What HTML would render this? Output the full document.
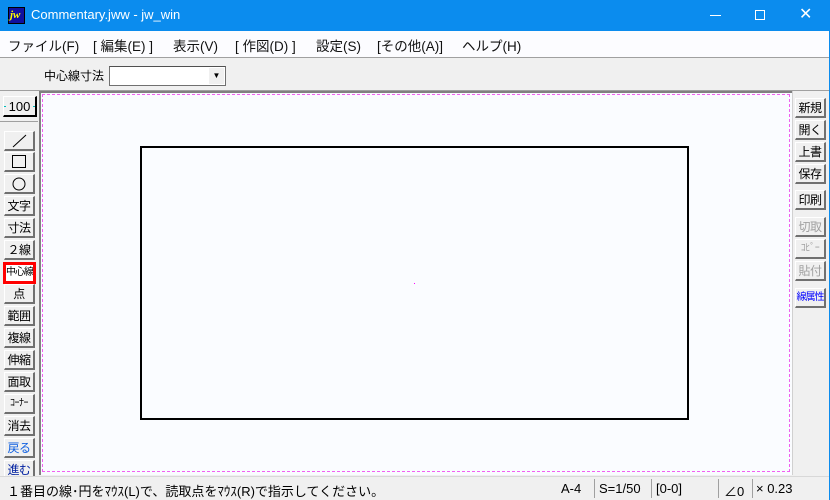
<!DOCTYPE html><html><head><meta charset="utf-8"><style>
*{margin:0;padding:0;box-sizing:border-box}
body{width:830px;height:500px;overflow:hidden;background:#f0f0f0;position:relative;font-family:"Liberation Sans","Noto Sans CJK JP",sans-serif;font-size:13px;color:#000}
.a{position:absolute}
.title{left:0;top:0;width:830px;height:31px;background:#0b8cee;color:#fff}
.menu{left:0;top:31px;width:830px;height:27px;background:#fcfcff;border-bottom:1px solid #a0a0a0}
.menu span{position:absolute;top:4px;font-size:13.5px;color:#111}
.btn{position:absolute;width:31px;height:20px;background:#f0f0f0;border-top:1px solid #fff;border-left:1px solid #fff;border-right:2px solid #707070;border-bottom:2px solid #707070;font-size:12px;text-align:center;line-height:18px;white-space:nowrap;overflow:hidden;letter-spacing:-0.5px}
</style></head><body>
<div class="a title">
 <div class="a" style="left:8px;top:7px;width:17px;height:17px;background:#1010a0;border:1px solid #000"><div style="color:#ff0;font:italic bold 11px 'Liberation Serif',serif;margin:1px 0 0 1px">jw</div></div>
 <div class="a" style="left:31px;top:7px;font-size:13px">Commentary.jww - jw_win</div>
 <div class="a" style="left:710px;top:15px;width:11px;height:1px;background:#fff"></div>
 <div class="a" style="left:755px;top:10px;width:10px;height:10px;border:1px solid #fff"></div>
 <div class="a" style="left:799px;top:4px;font-size:16px">✕</div>
</div>
<div class="a menu">
 <span style="left:8px">ファイル(F)</span><span style="left:93px">[ 編集(E) ]</span><span style="left:173px">表示(V)</span><span style="left:235px">[ 作図(D) ]</span><span style="left:316px">設定(S)</span><span style="left:377px">[その他(A)]</span><span style="left:462px">ヘルプ(H)</span>
</div>
<div class="a" style="left:44px;top:67px;font-size:12px">中心線寸法</div>
<div class="a" style="left:109px;top:66px;width:117px;height:20px;background:#fff;border:1px solid #707070;border-top-color:#505050"></div>
<div class="a" style="left:209px;top:68px;width:15px;height:16px;background:#f0f0f0;font-size:8px;text-align:center;line-height:16px">▼</div>
<div class="a" style="left:0;top:90px;width:830px;height:1px;background:#a0a0a0"></div>
<div class="a" style="left:39px;top:91px;width:753px;height:384px;background:#fafcff;border-left:2px solid #808080;border-top:2px solid #808080"></div>
<div class="a" style="left:42px;top:94px;width:748px;height:378px;border:1px dashed #f060f0"></div>
<div class="a" style="left:140px;top:146px;width:549px;height:274px;border:2px solid #000"></div>
<div class="a" style="left:414px;top:283px;width:1px;height:1px;background:#f0f"></div>
<div class="btn" style="left:3px;top:96px;width:34px;height:21px;font-size:13px;line-height:19px;border-right-color:#000;border-bottom-color:#000;letter-spacing:0">100</div>
<div class="a" style="left:4px;top:106px;width:2px;height:1px;background:#0bb"></div>
<div class="a" style="left:33px;top:106px;width:2px;height:1px;background:#0bb"></div>
<div class="a" style="left:0;top:121px;width:38px;height:1px;background:#a0a0a0"></div>
<div class="btn" style="left:4px;top:131px"><svg width="28" height="17"><line x1="8" y1="15" x2="21" y2="3" stroke="#000"/></svg></div>
<div class="btn" style="left:4px;top:152px"><svg width="28" height="17"><rect x="7.5" y="2.5" width="13" height="12" fill="none" stroke="#000"/></svg></div>
<div class="btn" style="left:4px;top:174px"><svg width="28" height="17"><circle cx="14" cy="9" r="6" fill="none" stroke="#000"/></svg></div>
<div class="btn" style="left:4px;top:196px">文字</div>
<div class="btn" style="left:4px;top:218px">寸法</div>
<div class="btn" style="left:4px;top:240px">２線</div>
<div class="btn" style="left:3px;top:262px;width:33px;height:22px;border:3px solid #f00;background:#fff;line-height:16px;font-size:10px;letter-spacing:-1px">中心線</div>
<div class="btn" style="left:4px;top:284px">点</div>
<div class="btn" style="left:4px;top:306px">範囲</div>
<div class="btn" style="left:4px;top:328px">複線</div>
<div class="btn" style="left:4px;top:350px">伸縮</div>
<div class="btn" style="left:4px;top:372px">面取</div>
<div class="btn" style="left:4px;top:394px;font-size:10px">ｺｰﾅｰ</div>
<div class="btn" style="left:4px;top:416px">消去</div>
<div class="btn" style="left:4px;top:438px;color:#1060e0">戻る</div>
<div class="btn" style="left:4px;top:460px;color:#0020a0">進む</div>
<div class="a" style="left:792px;top:91px;width:1px;height:384px;background:#d0d0d0"></div>
<div class="btn" style="left:795px;top:98px">新規</div>
<div class="btn" style="left:795px;top:120px">開く</div>
<div class="btn" style="left:795px;top:142px">上書</div>
<div class="btn" style="left:795px;top:164px">保存</div>
<div class="btn" style="left:795px;top:190px">印刷</div>
<div class="btn" style="left:795px;top:217px;color:#a0a0a0">切取</div>
<div class="btn" style="left:795px;top:239px;color:#a0a0a0;font-size:10px">ｺﾋﾟｰ</div>
<div class="btn" style="left:795px;top:261px;color:#a0a0a0">貼付</div>
<div class="btn" style="left:795px;top:288px;color:#00f;font-size:10px;letter-spacing:-1px">線属性</div>
<div class="a" style="left:0;top:476px;width:830px;height:24px;background:#f0f0f0;border-top:1px solid #d8d8d8"></div>
<div class="a" style="left:7px;top:481px;font-size:13px">１番目の線･円をﾏｳｽ(L)で、読取点をﾏｳｽ(R)で指示してください。</div>
<div class="a" style="left:561px;top:481px;font-size:13px">A-4</div>
<div class="a" style="left:599px;top:481px;font-size:13px">S=1/50</div>
<div class="a" style="left:656px;top:481px;font-size:13px">[0-0]</div>
<div class="a" style="left:724px;top:481px;font-size:13px">∠0</div>
<div class="a" style="left:756px;top:481px;font-size:13px">× 0.23</div>
<div class="a" style="left:594px;top:479px;width:1px;height:19px;background:#a0a0a0"></div>
<div class="a" style="left:651px;top:479px;width:1px;height:19px;background:#a0a0a0"></div>
<div class="a" style="left:718px;top:479px;width:1px;height:19px;background:#a0a0a0"></div>
<div class="a" style="left:752px;top:479px;width:1px;height:19px;background:#a0a0a0"></div>
<div class="a" style="left:829px;top:0;width:1px;height:500px;background:#0b8cee"></div>
</body></html>
